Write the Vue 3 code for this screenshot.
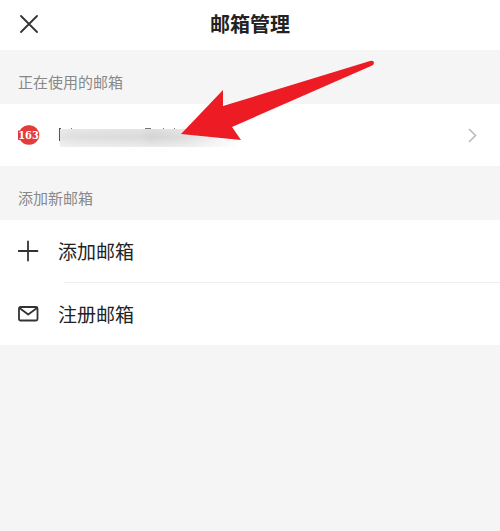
<script setup>
const actions = [
  { id: 'add', label: '添加邮箱' },
  { id: 'register', label: '注册邮箱' },
]
</script>

<template>
  <div class="page">
    <header class="bar">
      <button class="close" type="button" aria-label="关闭">
        <svg width="18" height="18" viewBox="0 0 18 18">
          <path d="M1 1L17 17M17 1L1 17" fill="none" stroke="#333" stroke-width="1.8" stroke-linecap="round" />
        </svg>
      </button>
      <h1 class="title">邮箱管理</h1>
    </header>

    <main>
      <section>
        <h2 class="caption">正在使用的邮箱</h2>
        <div class="account">
          <button class="row account-row" type="button" aria-label="163 邮箱">
            <svg class="icon" width="22" height="22" viewBox="0 0 22 22">
              <path d="M11 1.3C15 1.3 18.5 3.4 20 6.5Q21.5 8 21.3 11Q21.5 14.5 19.8 16C18 19 15 20.8 11 20.8C7 20.8 3.7 18.8 2.2 16H0V6.5H2C3.6 3.4 7 1.3 11 1.3Z" fill="#e43b3b" />
              <text x="10.5" y="15" text-anchor="middle" class="badge">163</text>
            </svg>
            <svg width="188" height="24" viewBox="0 0 188 24">
              <defs>
                <linearGradient id="veil">
                  <stop offset="0" stop-color="#e4e4e4" />
                  <stop offset=".1" stop-color="#dedede" />
                  <stop offset=".45" stop-color="#dadada" />
                  <stop offset=".5" stop-color="#d4d4d4" />
                  <stop offset=".7" stop-color="#dedede" />
                  <stop offset="1" stop-color="#fff" />
                </linearGradient>
                <linearGradient id="fade" x2="0" y2="1">
                  <stop offset="0" stop-color="#fff" stop-opacity=".25" />
                  <stop offset=".45" stop-color="#fff" stop-opacity="0" />
                  <stop offset="1" stop-color="#fff" stop-opacity=".5" />
                </linearGradient>
              </defs>
              <path d="M2.500 5V18M2.500 5.500H4" fill="none" stroke="#555" />
              <path d="M14 5.500H15M88 5.500H94M106 5.500H107M117 5.500H118" stroke="#777" />
              <path d="M3 6H183V24H3Z" fill="url(#veil)" />
              <path d="M3 6H183V24H3Z" fill="url(#fade)" />
            </svg>
            <svg class="chevron" width="9" height="15" viewBox="0 0 9 15">
              <path d="M1 1L7.500 7.500L1 14" fill="none" stroke="#bbb" stroke-width="1.6" />
            </svg>
          </button>
          <svg class="pointer" width="196" height="82" viewBox="0 0 196 82">
            <path d="M1 75L43 31V47L190 2Q194 1 194 4Q194 6 191 7L52 68L61 81Z" fill="#ed1c24" />
          </svg>
        </div>
      </section>

      <section>
        <h2 class="caption">添加新邮箱</h2>
        <ul class="list">
          <li v-for="item in actions" :key="item.id">
            <button class="row" type="button">
              <svg v-if="item.id === 'add'" class="icon" width="22" height="22" viewBox="0 0 22 22">
                <path d="M10 1.500V20.500M.5 11H19.500" fill="none" stroke="#333" stroke-width="1.8" stroke-linecap="round" />
              </svg>
              <svg v-else class="icon" width="22" height="22" viewBox="0 0 22 22">
                <rect x="1" y="4" width="18.500" height="13.500" rx="1.5" fill="none" stroke="#333" stroke-width="1.8" />
                <path d="M1.500 5L10.200 11.500L19 5" fill="none" stroke="#333" stroke-width="1.8" stroke-linejoin="round" />
              </svg>
              <span class="label">{{ item.label }}</span>
            </button>
          </li>
        </ul>
      </section>
    </main>
  </div>
</template>

<style>
body {
  margin: 0;
  background: #f5f5f5;
}
</style>

<style scoped>
.page {
  font-family: "Noto Sans CJK SC", sans-serif;
  color: #222;
}

button {
  margin: 0;
  border: 0;
  background: none;
  color: inherit;
  font: inherit;
  text-align: left;
  cursor: pointer;
}

svg {
  display: block;
  flex: none;
}

.bar {
  display: grid;
  grid-template-columns: 60px 1fr 60px;
  align-items: center;
  height: 50px;
  background: #fff;
}

.close {
  padding: 12px 20px 14px;
}

.title {
  margin: 0;
  padding-bottom: 2px;
  font-size: 20px;
  line-height: 28px;
  font-weight: 700;
  text-align: center;
}

.caption {
  margin: 0;
  padding: 20px 18px 10px;
  font-size: 15px;
  line-height: 24px;
  font-weight: 400;
  color: #888;
}

.account {
  position: relative;
}

.row {
  display: flex;
  align-items: center;
  gap: 18px;
  width: 100%;
  height: 62px;
  padding: 0 18px;
  background: #fff;
}

.account-row {
  gap: 17px;
  padding-right: 23px;
}

.badge {
  fill: #fff;
  font: 700 11px "DejaVu Serif Condensed", "DejaVu Serif", serif;
}

.chevron {
  margin-left: auto;
}

.pointer {
  position: absolute;
  left: 180px;
  bottom: 25px;
  pointer-events: none;
}

.list {
  margin: 0;
  padding: 0;
  list-style: none;
  background: #fff;
}

.list li + li::before {
  content: "";
  display: block;
  height: 1px;
  margin-left: 64px;
  background: #eee;
}

.label {
  font-size: 19px;
  line-height: 28px;
}
</style>
